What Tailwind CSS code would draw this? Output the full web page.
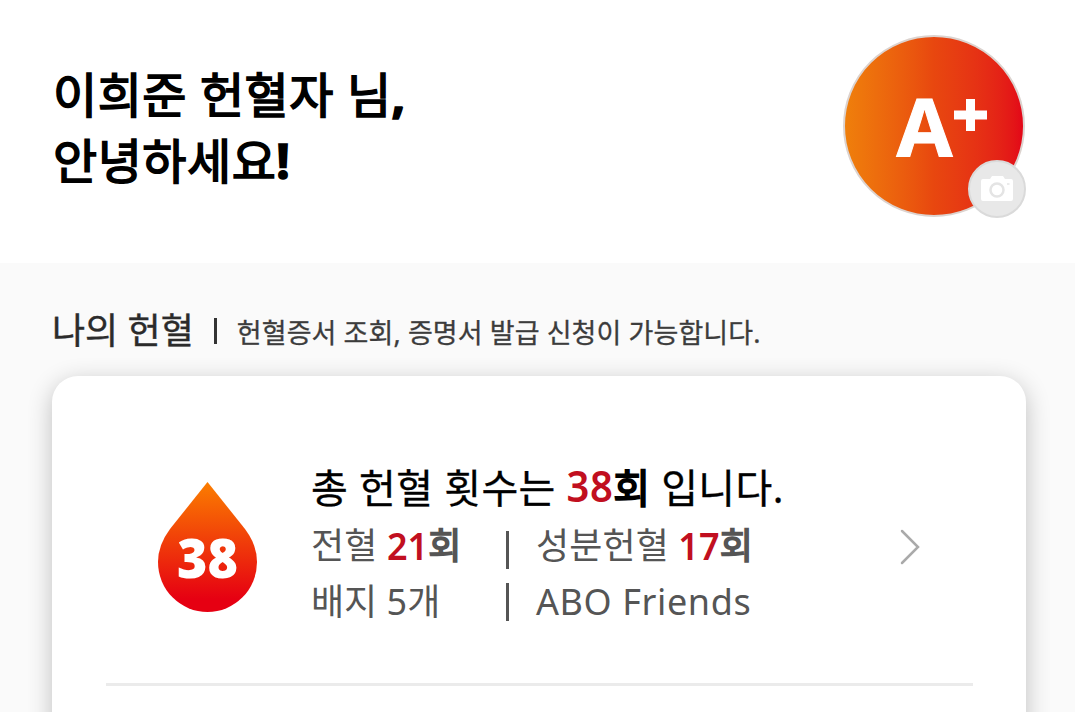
<!DOCTYPE html>
<html lang="ko">
  <head>
    <meta charset="UTF-8" />
    <meta name="viewport" content="width=device-width, initial-scale=1.0" />
    <title>나의 헌혈</title>
    <script src="https://cdn.jsdelivr.net/npm/@tailwindcss/browser@4"></script>
  </head>

  <body class="h-screen overflow-hidden bg-white font-['Noto_Sans','Noto_Sans_CJK_KR',sans-serif]">
    <div class="flex h-full flex-col overflow-hidden">
      <header class="flex h-[263px] shrink-0 items-start justify-between pt-[35px] pr-[49px] pl-[53px]">
        <h1 class="pt-[27px] text-[48px] leading-[66px] font-normal tracking-[0.5px] whitespace-nowrap text-black [-webkit-text-stroke:1.6px_#000]">
          이희준 헌혈자 님<b class="font-bold">,</b><br />안녕하세요<b class="font-bold">!</b>
        </h1>

        <div class="relative size-[183px]">
          <div class="flex size-[182px] items-start rounded-full border-2 border-[#dcd3cf] bg-linear-to-r from-[#ef7f0b] via-[#e8470f] to-[#e30518]">
            <svg viewBox="0 0 178 178" class="size-full">
              <text x="51.500" y="119.500" font-size="80" font-weight="700" font-family="Open Sans" fill="#fff" stroke="#fff" textLength="56" lengthAdjust="spacingAndGlyphs">A</text>
              <path d="M125.500 62v32M109 78h33" stroke="#fff" stroke-width="9" />
            </svg>
          </div>
          <button class="absolute right-0 bottom-0 flex size-[58px] items-center justify-center rounded-full border-2 border-[#dadada] bg-[#e8e8e8]">
            <svg viewBox="0 0 32 26" class="h-[26px] w-8">
              <path d="M2 3h7l2-3h11l2 3h6q2 0 2 2v18q0 2-2 2H2q-2 0-2-2V5q0-2 2-2z" fill="#fff" />
              <circle cx="16" cy="14" r="6.500" fill="#fff" stroke="#e4e4e4" stroke-width="2.500" />
              <path d="M26 8h2.500" stroke="#e4e4e4" stroke-width="1.500" />
            </svg>
          </button>
        </div>
      </header>

      <main class="flex min-h-0 grow flex-col overflow-hidden bg-[#fafafa] px-[52px] pt-[40px]">
        <div class="flex h-[54px] shrink-0 items-center pt-[2px] whitespace-nowrap">
          <h2 class="text-[36px] text-[#2b2b2b] [-webkit-text-stroke:0.4px_#2b2b2b]">나의 헌혈</h2>
          <span class="ml-[20px] h-[26px] w-[3px] bg-[#333]"></span>
          <p class="ml-[20px] pt-1 text-[27px] tracking-[0.08px] text-[#3c3c3c] [-webkit-text-stroke:0.3px_#3c3c3c]">헌혈증서 조회, 증명서 발급 신청이 가능합니다.</p>
        </div>

        <section class="mt-[19px] mr-[-3px] mb-[-40px] min-h-0 grow rounded-t-[26px] bg-white px-[54px] shadow-[0_6px_24px_rgba(0,0,0,0.24)]">
          <div class="flex h-[307px] items-start">
            <svg viewBox="0 0 100 130" class="mt-[106px] ml-[51px] h-[130px] w-[100px] shrink-0">
              <defs>
                <linearGradient id="drop" x1="0" y1="0" x2="0" y2="1">
                  <stop offset="0" stop-color="#fb7d00" />
                  <stop offset="0.900" stop-color="#e60012" />
                </linearGradient>
              </defs>
              <path d="M50.500 0L88 47Q100 63 100 80A49.500 50 0 0 1 1 80Q1 63 13 47Z" fill="url(#drop)" />
              <text x="50.500" y="95.500" text-anchor="middle" font-size="54" font-weight="800" font-family="Open Sans" fill="#fff" textLength="61" lengthAdjust="spacingAndGlyphs">38</text>
            </svg>

            <div class="mt-[83px] ml-[54px] w-[480px] whitespace-nowrap text-[#555]">
              <p class="text-[40px] leading-[58px] tracking-[0.4px] text-black [-webkit-text-stroke:0.3px_#000]">총 헌혈 횟수는 <b class="inline-block origin-bottom-left -translate-y-[1px] scale-y-110 font-semibold leading-[40px] text-[#c10f20] [-webkit-text-stroke:0px]">38</b><b class="font-normal [-webkit-text-stroke:1.8px_#000]">회</b> 입니다.</p>
              <div class="flex h-[56px] items-center pt-[2px] text-[36px]">
                <p class="w-[195px] tracking-[0.1px]">전혈 <b class="inline-block origin-center scale-y-105 font-semibold text-[#c10f20]">21</b><b class="font-normal [-webkit-text-stroke:1.6px_#555]">회</b></p>
                <span class="mt-[8px] mr-[27px] h-[38px] w-[3px] bg-[#555]"></span>
                <p class="tracking-[0.1px]">성분헌혈 <b class="inline-block origin-center scale-y-105 font-semibold text-[#c10f20]">17</b><b class="font-normal [-webkit-text-stroke:1.6px_#555]">회</b></p>
              </div>
              <div class="flex h-[54px] items-center pt-[3px] text-[36px]">
                <p class="w-[195px]">배지 5개</p>
                <span class="mr-[27px] h-[38px] w-[3px] bg-[#555]"></span>
                <p class="tracking-[0.6px]">ABO Friends</p>
              </div>
            </div>

            <svg viewBox="0 0 20 36" class="mt-[153px] ml-[109px] h-[36px] w-5 shrink-0" fill="none" stroke="#aaa" stroke-width="2.500" stroke-linecap="round">
              <path d="M2 2L18 18L2 34" />
            </svg>
          </div>
          <hr class="mr-[-1px] border-t-[3px] border-[#ebebeb]" />
        </section>
      </main>
    </div>
  </body>
</html>
